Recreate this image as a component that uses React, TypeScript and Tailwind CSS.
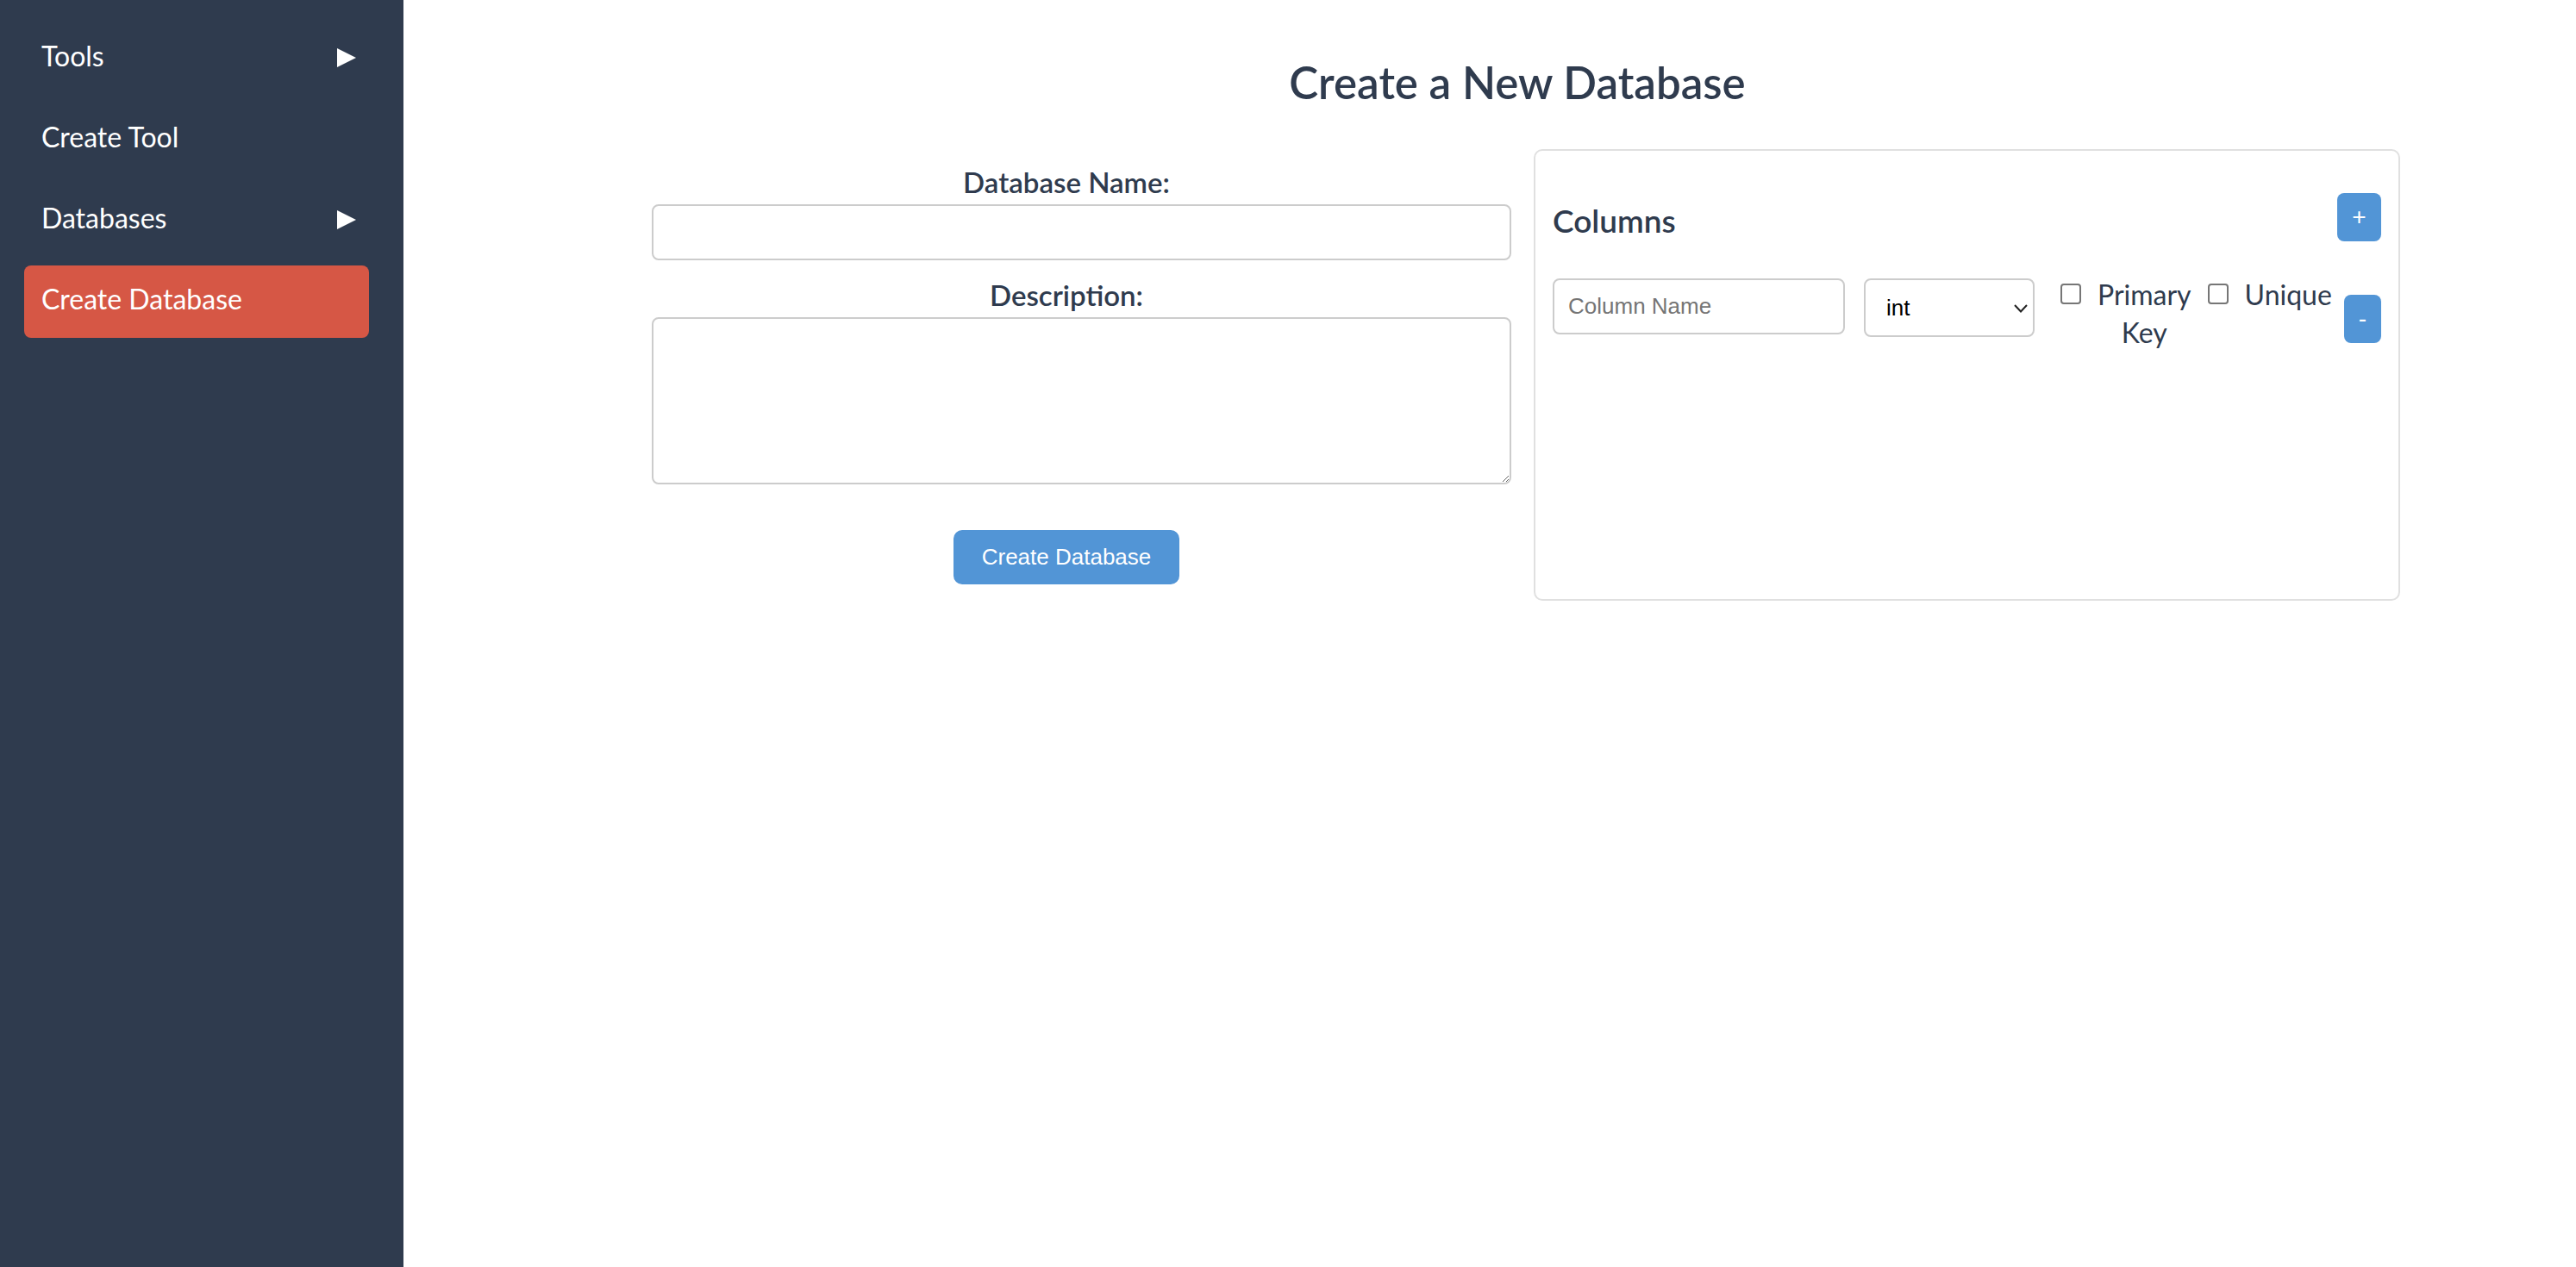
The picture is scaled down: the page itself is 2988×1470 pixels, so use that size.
import { useState } from "react";

const navItems = [
  { label: "Tools", arrow: true },
  { label: "Create Tool", arrow: false },
  { label: "Databases", arrow: true },
  { label: "Create Database", arrow: false, active: true },
];

function Sidebar() {
  return (
    <aside className="w-[468px] shrink-0 min-h-[1470px] bg-[#2f3b4e] pt-[26px] pl-[28px] pr-[40px]">
      <nav className="flex flex-col gap-[10px]">
        {navItems.map((item) => (
          <div
            key={item.label}
            className={
              "flex items-start justify-between h-[84px] pl-[20px] pr-[15px] pt-[20px] rounded-[8px] text-white text-[32px] leading-[38px] cursor-pointer " +
              (item.active ? "bg-[#d65745]" : "")
            }
          >
            <span>{item.label}</span>
            {item.arrow && (
              <svg width="22" height="22" viewBox="0 0 22 22" className="mt-[10px]">
                <polygon points="0,0 22,11 0,22" fill="white" />
              </svg>
            )}
          </div>
        ))}
      </nav>
    </aside>
  );
}

function CheckLabel({ children }: { children: React.ReactNode }) {
  return (
    <label className="flex items-start">
      <input
        type="checkbox"
        className="appearance-none mt-[9px] w-[24px] h-[24px] border-2 border-[#767676] rounded-[4px] bg-white shrink-0"
      />
      <span className="ml-[19px] text-center text-[32px] leading-[44px] text-[#2f3b4e]">{children}</span>
    </label>
  );
}

export default function App() {
  const [name, setName] = useState("");
  const [desc, setDesc] = useState("");
  const [colType, setColType] = useState("int");

  return (
    <div className="flex w-full min-h-[1470px] bg-white font-['Lato','Open_Sans',sans-serif] text-[#2f3b4e]">
      <Sidebar />
      <main className="flex-1 pl-[288px] pt-[66px]">
        <div className="w-[2028px]">
          <h1 className="text-center pr-[20px] text-[51px] leading-[60px] font-semibold">Create a New Database</h1>

          <div className="flex items-start gap-[61px] mt-[47px]">
            <form className="w-[962px] shrink-0 pt-[19px] flex flex-col items-start" onSubmit={(e) => e.preventDefault()}>
              <label className="block w-full text-center text-[33px] leading-[38px] font-semibold">Database Name:</label>
              <input
                value={name}
                onChange={(e) => setName(e.target.value)}
                className="mt-[7px] w-[997px] h-[65px] shrink-0 border-2 border-[#cccccc] rounded-[8px] px-[16px] text-[26px] font-['Liberation_Sans',Arial,sans-serif] outline-none"
              />
              <label className="block w-full mt-[21px] text-center text-[33px] leading-[38px] font-semibold">Description:</label>
              <textarea
                value={desc}
                onChange={(e) => setDesc(e.target.value)}
                className="mt-[7px] w-[997px] h-[194px] shrink-0 border-2 border-[#cccccc] rounded-[8px] px-[16px] py-[10px] text-[26px] font-['Liberation_Sans',Arial,sans-serif] outline-none"
              />
              <button
                type="submit"
                className="self-center mt-[53px] w-[262px] h-[63px] rounded-[10px] bg-[#5295d6] text-white text-[26px] font-['Liberation_Sans',Arial,sans-serif]"
              >
                Create Database
              </button>
            </form>

            <section className="w-[1005px] h-[524px] shrink-0 border-2 border-[#e0e0e0] rounded-[10px] pt-[49px] px-[20px]">
              <div className="flex items-start justify-between">
                <h2 className="mt-[10px] text-[37px] leading-[43px] font-semibold">Columns</h2>
                <button className="w-[51px] h-[56px] rounded-[8px] bg-[#5295d6] text-white text-[28px] leading-none font-['Liberation_Sans',Arial,sans-serif]">
                  +
                </button>
              </div>

              <div className="mt-[40px] flex items-start">
                <input
                  placeholder="Column Name"
                  className="mt-[3px] w-[339px] h-[65px] shrink-0 border-2 border-[#cccccc] rounded-[8px] px-[16px] text-[26px] text-black placeholder:text-[#757575] font-['Liberation_Sans',Arial,sans-serif] outline-none"
                />
                <div className="relative ml-[22px] mt-[3px] w-[198px] h-[68px] shrink-0">
                  <select
                    value={colType}
                    onChange={(e) => setColType(e.target.value)}
                    className="appearance-none w-full h-full border-2 border-[#cccccc] rounded-[8px] pl-[24px] bg-white text-[26px] text-black font-['Liberation_Sans',Arial,sans-serif] outline-none"
                  >
                    <option value="int">int</option>
                    <option value="varchar">varchar</option>
                    <option value="text">text</option>
                    <option value="date">date</option>
                  </select>
                  <svg
                    width="16"
                    height="10"
                    viewBox="0 0 16 10"
                    className="absolute right-[8px] top-[30px] pointer-events-none"
                  >
                    <polyline points="1,1 8,8.5 15,1" fill="none" stroke="#222" strokeWidth="2" />
                  </svg>
                </div>
                <div className="ml-[30px]">
                  <CheckLabel>
                    Primary
                    <br />
                    Key
                  </CheckLabel>
                </div>
                <div className="ml-[19px]">
                  <CheckLabel>Unique</CheckLabel>
                </div>
                <button className="ml-auto mt-[22px] w-[43px] h-[56px] rounded-[8px] bg-[#5295d6] text-white text-[28px] leading-none font-['Liberation_Sans',Arial,sans-serif]">
                  -
                </button>
              </div>
            </section>
          </div>
        </div>
      </main>
    </div>
  );
}
